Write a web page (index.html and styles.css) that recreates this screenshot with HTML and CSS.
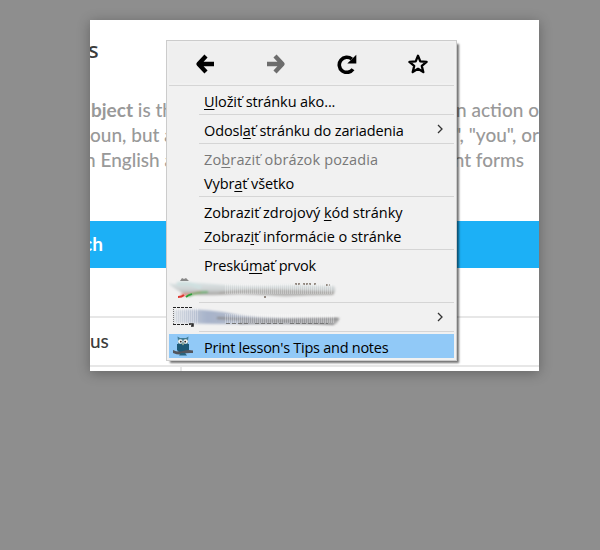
FILE: index.html
```html
<!DOCTYPE html>
<html lang="sk">
<head>
<meta charset="utf-8">
<title>Tips and notes</title>
<link rel="stylesheet" href="styles.css">
</head>
<body>
<main class="page">
  <h2 class="title">s</h2>
  <div class="copy">
    <div class="line"><span class="l1"><b>bject</b> is th</span><span class="r1">n action o</span></div>
    <div class="line"><span class="l2">oun, but a</span><span class="r2">", "you", or</span></div>
    <div class="line"><span class="l3">n English a</span><span class="r3">nt forms</span></div>
  </div>
  <div class="band"><span>ch</span></div>
  <div class="row"><span>us</span></div>
  <div class="row last"><i class="divider"></i></div>

  <nav class="menu">
    <div class="tools">
      <svg viewBox="0 0 20 20"><path d="M11 2 3.500 10l7.500 8M5 10h14" stroke="#000" stroke-width="4.300" fill="none" stroke-linecap="butt" stroke-linejoin="round"/></svg>
      <svg viewBox="0 0 20 20"><path d="M9 2 16.500 10 9 18M15 10H1" stroke="#6d6d6d" stroke-width="4.300" fill="none" stroke-linejoin="round"/></svg>
      <svg viewBox="0 0 20 20"><path d="M16 15.300A7.600 7.600 0 1 1 14.800 5" stroke="#000" stroke-width="3.600" fill="none"/><path d="M19.300 .7V9.500H10.300Z"/></svg>
      <svg viewBox="0 0 20 20"><path d="m10 1.800 2.300 5.600 6.300.5-4.800 4 1.500 6.200L10 14.800l-5.300 3.300 1.500-6.200-4.800-4 6.300-.5Z" stroke="#000" stroke-width="2.300" fill="none" stroke-linejoin="round"/></svg>
    </div>
    <div class="sep wide"></div>
    <div class="item"><span class="t1"><u>U</u>ložiť stránku ako...</span></div>
    <div class="sep"></div>
    <div class="item"><span class="t2">Odosl<u>a</u>ť stránku do zariadenia</span><svg class="chev" viewBox="0 0 6 10"><path d="m1 1 4 4-4 4"/></svg></div>
    <div class="sep"></div>
    <div class="item off"><span class="t3">Zo<u>b</u>raziť obrázok pozadia</span></div>
    <div class="item"><span class="t4">Vybr<u>a</u>ť všetko</span></div>
    <div class="sep"></div>
    <div class="item"><span class="t5">Zobraziť zdrojový <u>k</u>ód stránky</span></div>
    <div class="item"><span class="t6">Zobraz<u>i</u>ť informácie o stránke</span></div>
    <div class="sep"></div>
    <div class="item"><span class="t7">Preskú<u>m</u>ať prvok</span></div>
    <div class="item smudged">
      <svg class="smudge" viewBox="0 0 176 24">
        <defs>
          <linearGradient id="g1" x1="0" y1="0" x2="0" y2="1"><stop offset="0" stop-color="#dce5e6"/><stop offset=".5" stop-color="#cdd1d2"/><stop offset=".8" stop-color="#aaa9a7"/><stop offset="1" stop-color="#ddd"/></linearGradient>
          <linearGradient id="g2" x1="0" y1="0" x2="1" y2="0"><stop offset="0" stop-color="#d8dce2"/><stop offset=".2" stop-color="#a7b3ca"/><stop offset=".5" stop-color="#b7bdc9"/><stop offset="1" stop-color="#aaa"/></linearGradient>
          <filter id="soft" x="-10%" y="-40%" width="120%" height="180%"><feGaussianBlur stdDeviation=".8"/></filter>
          <pattern id="mesh" width="2" height="2" patternUnits="userSpaceOnUse"><path d="M0 0h1v2H0z" fill="#fff" opacity=".3"/></pattern>
        </defs>
        <g filter="url(#soft)"><path d="M4 8Q20 5 45 8T130 9l35 1q3 4-1 9-24 0-48 2-35-4-65-2-22 1-35-1-10-4-17-11Z" fill="url(#g1)"/><path d="M8 8Q20 6 32 12" stroke="#cfe0e0" stroke-width="4" fill="none"/><path d="M50 17Q90 12 165 17" stroke="#aaa8a5" stroke-width="2" fill="none"/><path d="M12 19q10 0 20-3" stroke="#e98e88" stroke-width="2.500" fill="none"/><path d="M19 20q8-4 20-4" stroke="#63b168" stroke-width="2" fill="none"/></g>
        <path d="M9 21q4 0 6-2" stroke="#dd3932" stroke-width="1.800" fill="none"/><path d="M17 21q2-2 6-3" stroke="#2ca13b" stroke-width="1.800" fill="none"/>
        <path d="M11 5l2-3 2 1 2-1 3 3" fill="#888"/><path d="M126 8h6m2 0h8m3 0h3m9 1h4m-66 12h2" stroke="#76685d" stroke-width="1.500" stroke-dasharray="2 1"/>
        <path d="M55 8h108v10H55z" fill="url(#mesh)"/>
      </svg>
    </div>
    <div class="sep"></div>
    <div class="item smudged">
      <svg class="smudge" viewBox="0 0 176 24">
        <path filter="url(#soft)" d="M5 5Q35 3 65 9t106 4l-4 6Q90 19 65 19T5 18Z" fill="url(#g2)"/>
        <path filter="url(#soft)" d="M48 13Q95 16 169 14M70 18q50-2 95 1" stroke="#8b8b8d" stroke-width="1.800" fill="none"/>
        <path d="M5 3h25v16H5z" fill="url(#mesh)"/><path d="M55 9h110v9H55z" fill="url(#mesh)"/>
        <path d="M4 2.500h19M4 19.500h17" stroke="#222" stroke-width="1.200" stroke-dasharray="3 1" fill="none"/><path d="M4.500 4v15" stroke="#777" stroke-dasharray="1 1"/><path d="M20 19h4v2h-2" stroke="#222" stroke-width="1.500" fill="none"/><path d="M57 18.500h22m7 0h30m5 0h38" stroke="#777" stroke-dasharray="4 2"/>
      </svg>
      <svg class="chev" viewBox="0 0 6 10"><path d="m1 1 4 4-4 4"/></svg>
    </div>
    <div class="sep"></div>
    <div class="item active">
      <svg class="owl" viewBox="0 0 20 20">
        <path d="M4.500.5 7 2h6L15.500.5 15 4.500v10Q14 17 10 17t-5-2.500v-10Z" fill="#427c95"/>
        <path d="M4 8h12v6Q14 17 10 17t-6-3Z" fill="#1c5875"/>
        <circle cx="7.400" cy="5.500" r="2.300" fill="#f5f5ef"/><circle cx="12.600" cy="5.500" r="2.300" fill="#f5f5ef"/><circle cx="7.800" cy="5.700" r=".9" fill="#222"/><circle cx="12.200" cy="5.700" r=".9" fill="#222"/><path d="m9 7.500 1 2 1-2Z" fill="#ddd49a"/>
        <path d="M0 14Q5 16.500 10 15t10-.5v2.500Q14 16.500 10 18T0 17Z" fill="#53565d"/><path d="M8 17h4l2 2.500H6Z" fill="#29647f"/>
      </svg>
      <span class="t8">Print lesson's Tips and notes</span>
    </div>
  </nav>
</main>
</body>
</html>
```

FILE: styles.css
```css
* { box-sizing: border-box; }
body { margin: 0; height: 550px; overflow: hidden; background: #8e8e8e; padding: 20px 0 0 90px; }
.page { position: relative; width: 449px; height: 351px; background: #fff; box-shadow: 0 2px 12px rgba(0,0,0,.3); }
.title { margin: 0; height: 77px; padding-top: 14px; font: 500 22px/30px "Noto Sans", sans-serif; color: #3c3c3c; overflow: hidden; text-indent: -2px; }
.copy { height: 124px; overflow: hidden; font: 500 19px/25px Lato, sans-serif; color: #999; }
.line { display: flex; justify-content: space-between; height: 25px; white-space: nowrap; }
.line span { display: block; }
.line b { font-weight: 700; }
.l1 { margin-left: 1px; }
.l3 { margin-left: -5px; }
.r3 { margin-right: 15px; }
.band { height: 47px; background: #1cb0f6; color: #fff; font: 700 19px/45px Lato, sans-serif; overflow: hidden; }
.band span { margin-left: -7px; }
.row { height: 49px; margin-top: 48px; border-top: 2px solid #e7e7e7; font: 500 19px/45px Lato, sans-serif; color: #3c3c3c; }
.row.last { margin-top: 0; height: 6px; padding-left: 90px; }
.divider { display: block; width: 2px; height: 4px; background: #e7e7e7; }

.menu { position: absolute; left: 76px; top: 20px; width: 291px; height: 321px; padding: 2px; border: 1px solid #ccc; background: #f1f1f1; box-shadow: 3px 3px 2px -1px rgba(0,0,0,.55); font: 14.500px/24px "Open Sans", "Noto Sans", sans-serif; color: #000; }
.tools { display: flex; height: 40px; padding-top: 2px; align-items: center; justify-content: space-around; background: #efefef; }
.tools svg { width: 20px; height: 20px; }
.sep { height: 5px; margin-left: 30px; padding-top: 2px; }
.sep::before { content: ""; display: block; height: 1px; background: #d5d5d5; }
.sep.wide { margin-left: 0; }
.item { display: flex; align-items: center; justify-content: space-between; height: 24px; padding: 0 11px 0 35px; white-space: nowrap; }
.item span { padding-top: 3px; }
.item u { text-underline-offset: 2px; text-decoration-thickness: 1px; }
.off { color: #787878; }
.chev { width: 6px; height: 10px; fill: none; stroke: #333; stroke-width: 1.300; }
.item.smudged { padding-left: 0; }
.smudge { width: 176px; height: 24px; }
.item.active { background: #91c9f7; justify-content: flex-start; padding-left: 4px; }
.owl { width: 20px; height: 20px; margin-right: 11px; }
.t1 { letter-spacing: -.1px; }
.t2 { letter-spacing: -.12px; }
.t3 { letter-spacing: .14px; }
.t4 { letter-spacing: -.1px; }
.t5 { letter-spacing: -.02px; }
.t6 { letter-spacing: -.04px; }
.t7 { letter-spacing: -.2px; }
.t8 { letter-spacing: -.26px; }
```
